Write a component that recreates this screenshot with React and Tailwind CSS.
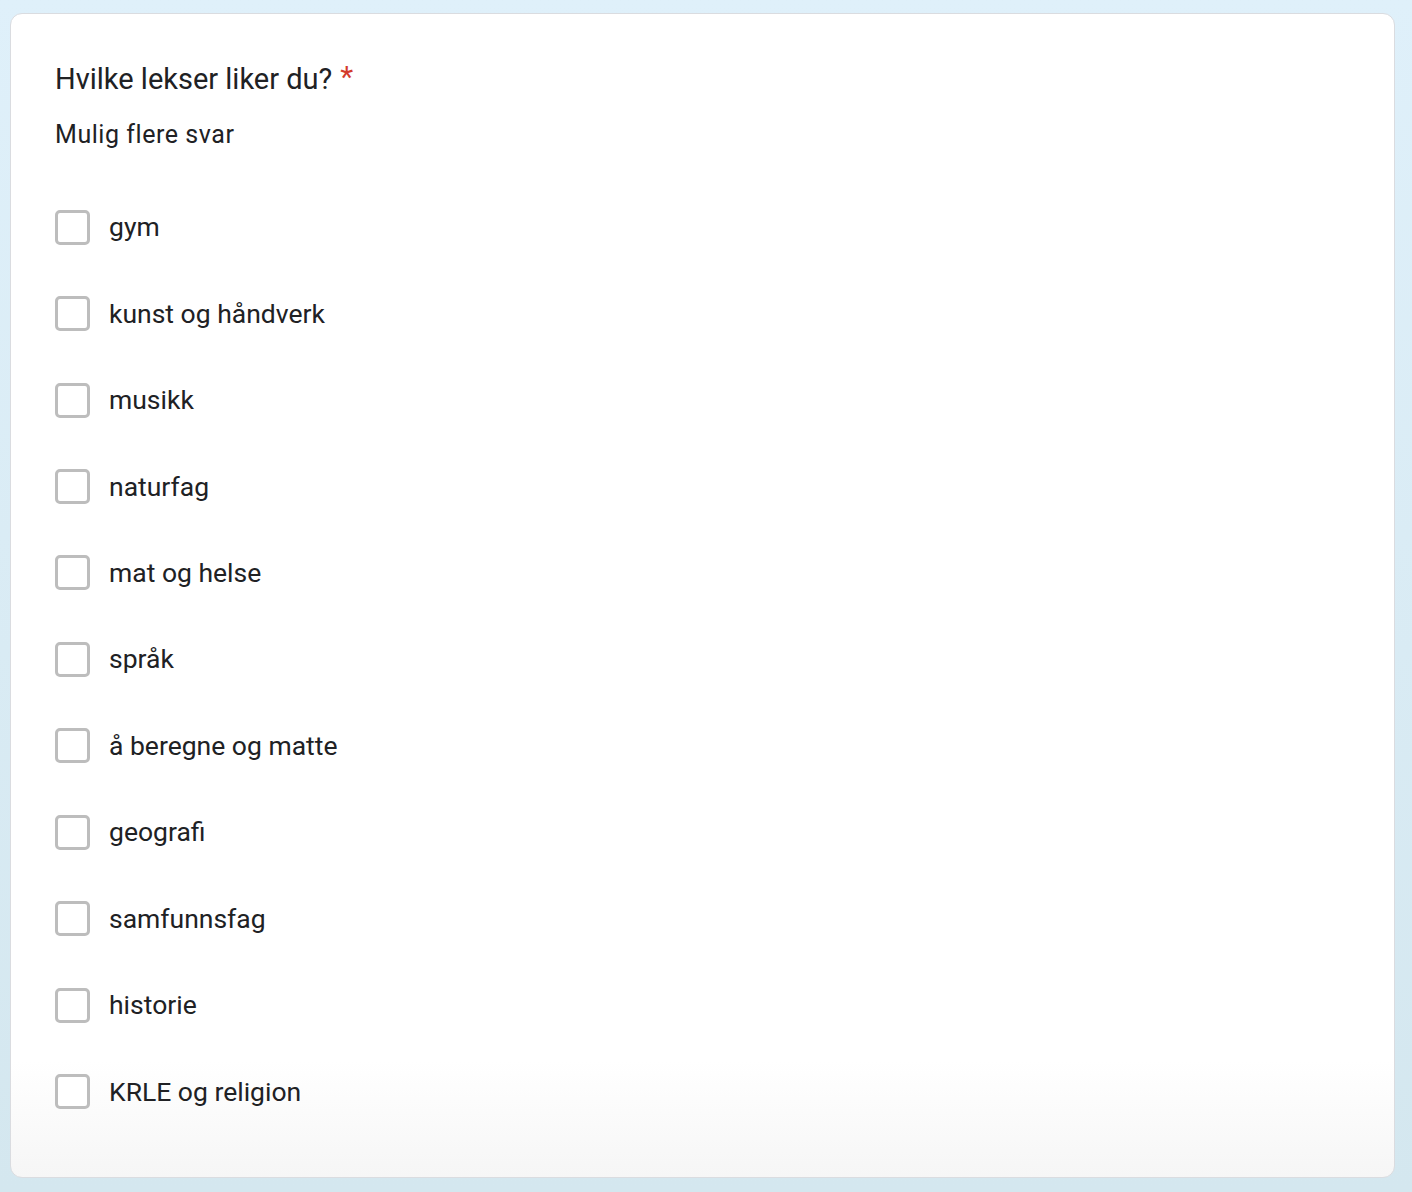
const options = [
  "gym",
  "kunst og håndverk",
  "musikk",
  "naturfag",
  "mat og helse",
  "språk",
  "å beregne og matte",
  "geografi",
  "samfunnsfag",
  "historie",
  "KRLE og religion",
];

export default function App() {
  return (
    <div
      className="min-h-[1192px] w-full bg-gradient-to-b from-[#dff0fa] to-[#d4e7ef] pt-[13px] pl-[10px] pr-[17px] pb-[14px]"
      style={{ fontFamily: "Roboto, 'Noto Sans', Arial, sans-serif" }}
    >
      <div className="h-[1165px] rounded-[12px] border border-[#dadce0] bg-gradient-to-b from-white from-90% to-[#f6f6f6] pl-[44px] pt-[47px] text-[#202124]">
        {/* question title */}
        <div className="flex items-start text-[29px] leading-[36px]">
          <span>Hvilke lekser liker du?</span>
          <span className="ml-[8px] text-[#d33b2c] text-[30px] leading-[32px]">*</span>
        </div>
        <div className="mt-[22px] text-[25px] leading-[32px] tracking-[0.55px]">Mulig flere svar</div>

        {/* choices */}
        <div className="mt-[33px] flex flex-col">
          {options.map((opt) => (
            <label key={opt} className="flex h-[86.45px] items-center gap-[19px] cursor-pointer">
              <span className="h-[35px] w-[35px] shrink-0 rounded-[5px] border-[3px] border-[#bdbdbd] bg-white" />
              <span className="text-[26.5px] leading-[32px]">{opt}</span>
            </label>
          ))}
        </div>
      </div>
    </div>
  );
}
